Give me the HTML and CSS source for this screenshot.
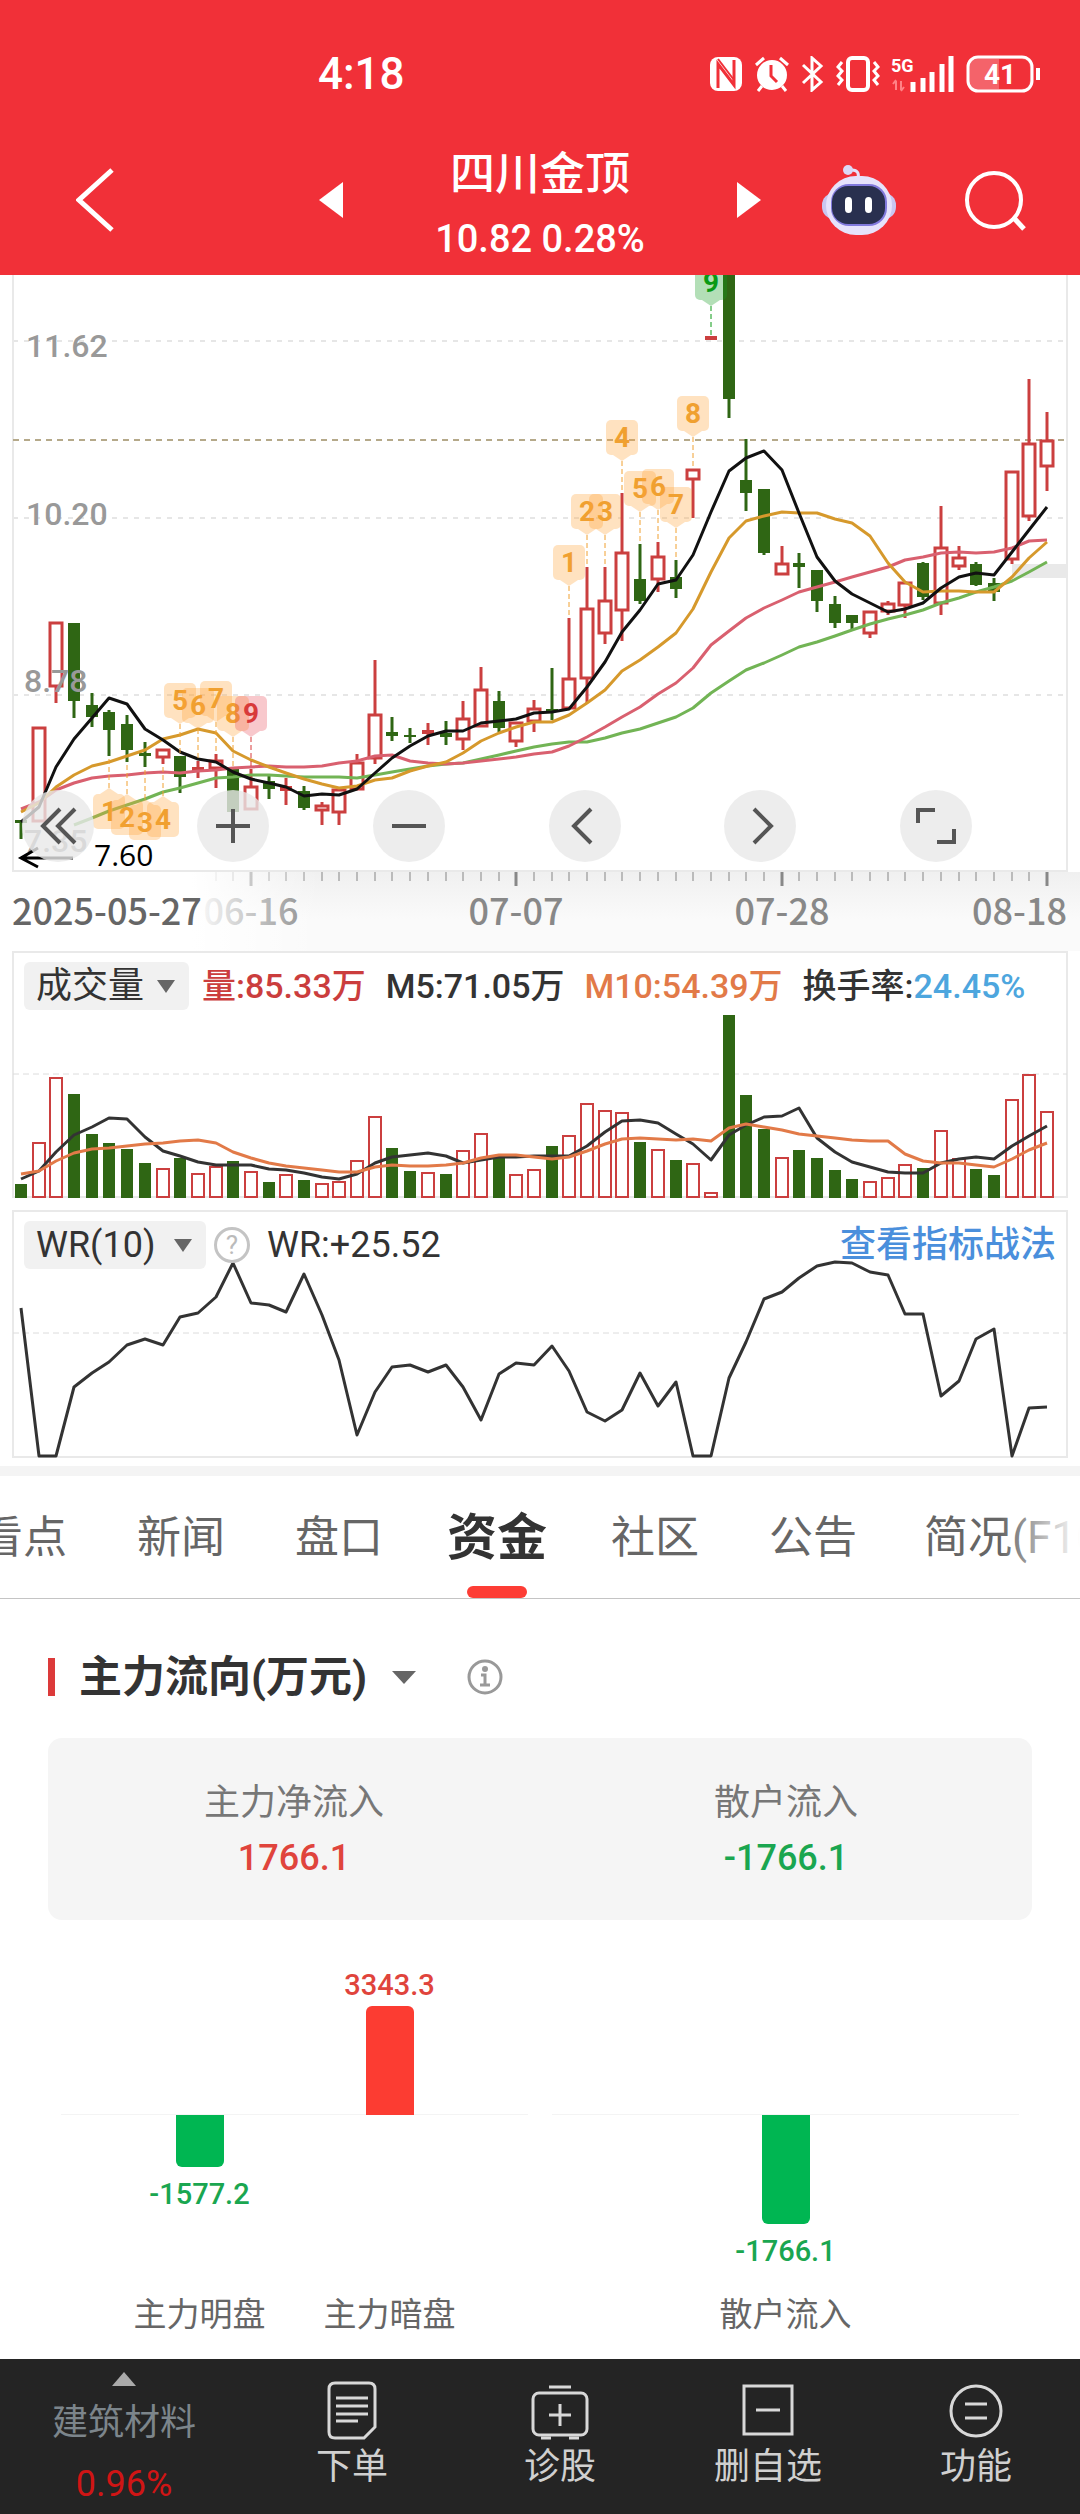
FILE: index.html
```html
<!DOCTYPE html>
<html lang="zh-CN">
<head>
<meta charset="UTF-8">
<meta name="viewport" content="width=device-width, initial-scale=1">
<title>四川金顶</title>
<link rel="stylesheet" href="styles.css">
</head>
<body>

<header class="header">
	<div class="status">
		<span class="time">4:18</span>
		<div class="status-icons">
			<svg width="34" height="36" viewBox="0 0 34 36"><rect x="1" y="1" width="32" height="34" rx="8" fill="#fff"/><path d="M9 32V8l16 21V4" fill="none" stroke="#f13038" stroke-width="3"/><path d="M9 3l16 21" stroke="#f13038" stroke-width="2"/></svg>
			<svg width="36" height="36" viewBox="0 0 36 36"><circle cx="18" cy="19" r="15" fill="#fff"/><path d="M2 9l8-7M34 9l-8-7M8 30l-4 5M28 30l4 5" stroke="#fff" stroke-width="3"/><path d="M17 9v11l6 6" fill="none" stroke="#f13038" stroke-width="3"/></svg>
			<svg width="24" height="36" viewBox="0 0 24 36"><path d="M2 9l18 17-9 8V2l9 8L2 27" fill="none" stroke="#fff" stroke-width="3"/></svg>
			<svg width="44" height="36" viewBox="0 0 44 36"><rect x="12" y="2" width="20" height="32" rx="4" fill="none" stroke="#fff" stroke-width="4"/><path d="M6 6l-4 5 4 4-4 5 4 4-4 5M38 6l4 5-4 4 4 5-4 4 4 5" fill="none" stroke="#fff" stroke-width="3"/></svg>
			<svg width="64" height="38" viewBox="0 0 64 38"><text x="0" y="17" class="net">5G</text><path d="M5 26v9m-3-6l3-4m5 10v-9m3 6l-3 4" fill="none" stroke="#ff8286" stroke-width="2"/><path d="M22 37V27M32 37V23M41 37V17M51 37V9M60 37V1" stroke="#fff" stroke-width="5"/></svg>
			<svg width="74" height="38" viewBox="0 0 74 38"><rect x="2" y="2" width="64" height="34" rx="10" fill="#f4636a" stroke="#fff" stroke-width="3"/><path d="M33 4h22q9 0 9 9v12q0 9-9 9H33z" fill="#f13038"/><path d="M72 13v12" stroke="#fff" stroke-width="4"/><text x="34" y="29" class="power">41</text></svg>
		</div>
	</div>
	<nav class="nav">
		<button class="back" aria-label="返回"><svg width="38" height="64" viewBox="0 0 38 64"><path d="M36 2L3 32l33 30" fill="none" stroke="#fff" stroke-width="5"/></svg></button>
		<div class="stock">
			<button aria-label="上一只"><svg width="24" height="36" viewBox="0 0 24 36"><path d="M24 0v36L0 18z" fill="#fff"/></svg></button>
			<div class="name">
				<h1>四川金顶</h1>
				<p class="num">10.82 0.28%</p>
			</div>
			<button aria-label="下一只"><svg width="24" height="36" viewBox="0 0 24 36"><path d="M0 0v36l24-18z" fill="#fff"/></svg></button>
		</div>
		<div class="tools">
			<button aria-label="智能助手"><svg width="74" height="70" viewBox="0 0 74 70"><path d="M36 14q2-9-6-9" fill="none" stroke="#e6e1fb" stroke-width="3"/><circle cx="26" cy="5" r="5" fill="#dcd8f6"/><rect x="0" y="28" width="74" height="26" rx="12" fill="#c9c6f0"/><rect x="4" y="11" width="66" height="59" rx="30" fill="#e6e2fb"/><rect x="9" y="19" width="56" height="42" rx="18" fill="#8179dc"/><rect x="10" y="21" width="53" height="38" rx="16" fill="#29304f"/><rect x="23" y="32" width="7" height="16" rx="4" fill="#fff"/><rect x="43" y="32" width="7" height="16" rx="4" fill="#fff"/></svg></button>
			<button aria-label="搜索"><svg width="62" height="62" viewBox="0 0 62 62"><circle cx="30" cy="31" r="27" fill="none" stroke="#fff" stroke-width="4"/><path d="M49 48l11 12" stroke="#fff" stroke-width="5"/></svg></button>
		</div>
	</nav>
</header>

<main>
	<section class="panel">
		<svg id="kline" class="chart" viewBox="0 275 1080 597"></svg>
		<div class="controls">
			<button aria-label="收起"><svg viewBox="0 0 72 72"><path d="M38 19L21 36l17 17M53 19L36 36l17 17"/></svg></button>
			<button aria-label="放大"><svg viewBox="0 0 72 72"><path d="M19 36h34M36 19v34"/></svg></button>
			<button aria-label="缩小"><svg viewBox="0 0 72 72"><path d="M19 36h34"/></svg></button>
			<button aria-label="左移"><svg viewBox="0 0 72 72"><path d="M42 19L25 36l17 17"/></svg></button>
			<button aria-label="右移"><svg viewBox="0 0 72 72"><path d="M30 19l17 17-17 17"/></svg></button>
			<button aria-label="全屏"><svg viewBox="0 0 72 72"><path d="M18 33V20h17M54 39v13H37"/></svg></button>
		</div>
	</section>
	<svg id="axis" class="chart axis" viewBox="0 872 1080 79"></svg>

	<section class="panel volume">
		<svg id="vol" class="chart" viewBox="0 951 1080 248"></svg>
		<div class="legend">
			<label class="drop"><select aria-label="成交量指标"><option>成交量</option></select></label>
			<div class="vals num">
				<span class="red">量:85.33万</span>
				<span>M5:71.05万</span>
				<span class="orange">M10:54.39万</span>
				<span>换手率:<b>24.45%</b></span>
			</div>
		</div>
	</section>

	<section class="panel wr">
		<svg id="wr" class="chart" viewBox="0 1210 1080 248"></svg>
		<div class="legend">
			<label class="drop"><select aria-label="技术指标"><option>WR(10)</option></select></label>
			<button class="help" aria-label="说明">?</button>
			<span>WR:+25.52</span>
			<a href="#" class="more">查看指标战法</a>
		</div>
	</section>

	<nav class="tabs">
		<a href="#">看点</a>
		<a href="#">新闻</a>
		<a href="#">盘口</a>
		<a href="#" class="active">资金</a>
		<a href="#">社区</a>
		<a href="#">公告</a>
		<a href="#" class="last">简况(F10)</a>
	</nav>

	<section class="fund">
		<div class="title">
			<label class="drop"><select aria-label="主力流向"><option>主力流向(万元)</option></select></label>
			<button aria-label="说明"><svg width="38" height="38" viewBox="0 0 38 38"><g fill="none" stroke="#999" stroke-width="3"><circle cx="19" cy="19" r="16"/><path d="M15 17h4v10M14 27h10"/></g><circle cx="19" cy="11" r="3" fill="#999"/></svg></button>
		</div>
		<dl class="card">
			<div><dt>主力净流入</dt><dd class="num up">1766.1</dd></div>
			<div><dt>散户流入</dt><dd class="num down">-1766.1</dd></div>
		</dl>
		<div class="flow">
			<div class="group">
				<div class="col">
					<div class="above"></div>
					<div class="below down"><i style="height:52px"></i><span class="num">-1577.2</span></div>
					<p>主力明盘</p>
				</div>
				<div class="col">
					<div class="above up"><span class="num">3343.3</span><i style="height:109px"></i></div>
					<div class="below"></div>
					<p>主力暗盘</p>
				</div>
			</div>
			<div class="group">
				<div class="col">
					<div class="above"></div>
					<div class="below down"><i style="height:109px"></i><span class="num">-1766.1</span></div>
					<p>散户流入</p>
				</div>
			</div>
		</div>
	</section>
</main>

<footer class="footer">
	<a href="#" class="sector">
		<svg width="24" height="14" viewBox="0 0 24 14"><path d="M12 0l12 14H0z" fill="#aaa"/></svg>
		<span>建筑材料</span>
		<em class="num">0.96%</em>
	</a>
	<a href="#"><svg width="60" height="60" viewBox="0 0 60 60"><path d="M13 3h34q6 0 6 6v38l-11 11H13q-6 0-6-6V9q0-6 6-6z"/><path d="M14 18h32M14 26h32M14 34h32M14 41h22"/></svg><span>下单</span></a>
	<a href="#"><svg width="60" height="60" viewBox="0 0 60 60"><rect x="3" y="13" width="54" height="42" rx="6"/><path d="M19 7h22M30 24v22M19 35h22M11 58h10M39 58h10"/></svg><span>诊股</span></a>
	<a href="#"><svg width="60" height="60" viewBox="0 0 60 60"><rect x="6" y="6" width="48" height="48"/><path d="M18 30h24"/></svg><span>删自选</span></a>
	<a href="#"><svg width="60" height="60" viewBox="0 0 60 60"><circle cx="30" cy="31" r="25"/><path d="M19 24h22M19 38h22"/></svg><span>功能</span></a>
</footer>

<script src="chart.js"></script>
</body>
</html>
```
FILE: styles.css
```css
*{ margin:0; padding:0; box-sizing:border-box;}
body{
	background:#fff;
	color:#333;
	font-family:Roboto, "Noto Sans CJK SC", sans-serif;
	font-size:36px;
}
button{ border:0; background:none; font:inherit; color:inherit;}
a{ color:inherit; text-decoration:none;}
svg{ display:block;}
em,i{ font-style:normal;}
.num{ font-weight:500;}

/* 顶部 */
.header{
	background:#f13038;
	color:#fff;
	height:275px;
}
.status{
	display:flex;
	justify-content:space-between;
	align-items:center;
	height:148px;
	padding:0 40px 0 318px;
}
.time{ font-size:44px; font-weight:500;}
.status-icons{
	display:flex;
	align-items:center;
	gap:11px;
}
.net{ font:bold 18px Roboto, sans-serif; fill:#fff;}
.power{ font:bold 28px Roboto, sans-serif; fill:#fff; text-anchor:middle;}
.nav{
	display:grid;
	grid-template-columns:1fr 442px 1fr;
	grid-template-rows:104px;
	align-items:center;
}
.back{ justify-self:start; padding-left:76px;}
.stock{
	display:flex;
	justify-content:space-between;
	align-items:center;
}
.name{ padding-top:14px; text-align:center;}
.name h1{ font-size:45px; line-height:64px; font-weight:500;}
.name p{ font-size:38px; line-height:64px;}
.tools{
	display:flex;
	justify-content:flex-end;
	align-items:center;
	gap:68px;
	padding-right:54px;
}

/* 图表 */
.panel{ position:relative;}
.chart{ width:100%; height:auto; overflow:hidden;}
.axis{ background:linear-gradient(#f0f0f0, #fafafa 60%);}
.wr{ margin-top:11px;}
.frame{ fill:none; stroke:#e9e9e9; stroke-width:2;}
.grid{ stroke:#e6e6e6; stroke-width:2; stroke-dasharray:5 6;}
.thin{ stroke:#dcdcdc; stroke-width:1; stroke-dasharray:6 4;}
.price{ stroke:#b5a98a; stroke-width:2; stroke-dasharray:6 5;}
.line{ fill:none; stroke-width:3; stroke-linejoin:round;}
.scale{ font:500 32px Roboto, sans-serif; fill:#999;}
.low{ font:30px "Open Sans", sans-serif; fill:#000;}
.tag{ font:bold 28px Roboto, sans-serif; text-anchor:middle;}
.date{ font:500 36px "Noto Sans CJK SC", sans-serif; fill:#888;}
.date .start{ fill:#666;}
.controls{
	position:absolute;
	left:2%;
	right:10%;
	bottom:10px;
	display:flex;
	justify-content:space-between;
}
.controls button{
	width:72px;
	height:72px;
	border-radius:50%;
	background:rgba(232,232,232,.8);
}
.controls path{ fill:none; stroke:#555; stroke-width:4;}
.legend{
	position:absolute;
	top:11px;
	left:24px;
	right:24px;
	display:flex;
	align-items:center;
	height:48px;
	white-space:nowrap;
	line-height:48px;
}
.drop{
	display:flex;
	align-items:center;
	gap:12px;
}
.drop:after{
	content:"";
	border:9px solid transparent;
	border-top:13px solid #666;
	border-bottom:0;
}
.drop select{
	appearance:none;
	border:0;
	background:none;
	font:inherit;
	color:inherit;
}
.legend .drop{
	height:48px;
	padding:0 14px 0 12px;
	border-radius:6px;
	background:#f1f1f1;
}
.wr .drop{ gap:18px;}
.vals{
	display:flex;
	gap:20px;
	margin-left:13px;
	font-size:34px;
}
.vals b{ font-weight:500; color:#4da6de;}
.red{ color:#cb3d3d;}
.orange{ color:#e27a48;}
.help{
	width:36px;
	height:36px;
	margin:0 17px 0 8px;
	border:3px solid #c4c4c4;
	border-radius:50%;
	color:#bbb;
	font-size:26px;
	line-height:30px;
}
.more{ margin-left:auto; color:#4a8fdc; font-weight:500;}

/* 标签 */
.tabs{
	position:relative;
	display:flex;
	height:133px;
	margin-top:8px;
	padding-right:40px;
	border-top:10px solid #f4f4f4;
	border-bottom:1px solid #c4c4c4;
	overflow:hidden;
	white-space:nowrap;
	color:#666;
	font-size:44px;
	line-height:124px;
}
.tabs a{
	flex:none;
	width:158px;
	text-align:center;
}
.tabs a:first-child{ margin-left:-56px;}
.tabs .last{ width:auto; padding-left:32px;}
.tabs .active{
	position:relative;
	color:#333;
	font-size:50px;
	font-weight:700;
}
.tabs .active:after{
	content:"";
	position:absolute;
	left:50%;
	bottom:0;
	width:60px;
	height:12px;
	margin-left:-30px;
	border-radius:6px;
	background:#fd3d35;
}
.tabs:after{
	content:"";
	position:absolute;
	right:0;
	top:0;
	width:80px;
	height:100%;
	background:linear-gradient(to right, rgba(255,255,255,0), #fff);
}

/* 资金 */
.fund{ padding:48px 48px 0;}
.title{
	display:flex;
	align-items:center;
	gap:50px;
	height:60px;
}
.title .drop{ gap:24px; font-size:43px; font-weight:700;}
.title .drop:before{
	content:"";
	width:7px;
	height:38px;
	background:#dc3a3a;
}
.title .drop:after{ border-width:13px 12px 0;}
.card{
	display:grid;
	grid-template-columns:1fr 1fr;
	margin-top:31px;
	padding:38px 0 34px;
	border-radius:14px;
	background:#f5f5f5;
	text-align:center;
	color:#777;
	line-height:55px;
}
.up,.up span{ color:#e0443c;}
.down,.down span{ color:#1aa650;}
.flow{
	display:grid;
	grid-template-columns:1fr 1fr;
	gap:24px;
	padding:35px 13px 0;
}
.group{
	display:flex;
	justify-content:center;
	background:linear-gradient(#f4f4f4, #f4f4f4) 0 159px / 100% 1px no-repeat;
}
.col{
	width:190px;
	display:flex;
	flex-direction:column;
	text-align:center;
	color:#666;
	font-size:33px;
}
.col .num{ font-size:29px; line-height:42px;}
.above,.below{
	display:flex;
	flex-direction:column;
	align-items:center;
	height:160px;
}
.above{ justify-content:flex-end;}
.col i{ width:48px;}
.above i{ border-radius:6px 6px 0 0; background:#fc3c32;}
.below i{ border-radius:0 0 6px 6px; background:#00b652;}
.below span{ padding-top:6px;}
.col p{ line-height:40px; padding:20px 0 24px;}

/* 底部 */
.footer{
	display:grid;
	grid-template-columns:248px repeat(4, 1fr);
	height:155px;
	background:#242424;
	color:#d0d0d0;
}
.footer a{
	display:flex;
	flex-direction:column;
	align-items:center;
	gap:3px;
	padding-top:21px;
	line-height:48px;
}
.footer a svg{ fill:none; stroke:#d8d8d8; stroke-width:3;}
.footer .sector{ gap:13px; padding-top:13px; color:#7c858b;}
.footer .sector svg{ stroke:none;}
.sector em{ color:#d01515; font-weight:400;}
```
FILE: chart.js
```javascript
// 每根K线: [涨跌(1红 0绿), 实体上, 实体下, 最高, 最低]
var k = [
	[0,820,823,820,839],[1,727,822,727,822],[1,622,687,622,703],[0,623,701,623,718],[0,705,717,693,727],
	[0,712,730,710,756],[0,724,750,715,762],[0,753,756,742,767],[1,749,758,749,764],[0,756,777,756,793],
	[1,767,772,761,778],[1,760,769,754,788],[0,769,812,769,812],[1,786,810,769,810],[0,781,789,776,799],
	[1,786,791,778,805],[0,791,808,786,810],[1,805,811,802,825],[1,789,813,789,825],[1,762,790,754,790],
	[1,714,759,660,764],[0,732,736,717,741],[0,735,737,728,743],[1,730,734,723,745],[0,733,737,721,745],
	[1,718,740,701,750],[1,689,727,667,727],[0,701,728,691,732],[1,722,742,722,747],[1,708,722,700,732],
	[0,709,712,668,720],[1,678,709,618,709],[1,608,679,567,703],[1,600,634,567,644],[1,552,611,493,641],
	[0,579,601,544,604],[1,556,580,542,592],[0,577,589,560,598],[1,469,480,469,518],[1,336,340,338,338],
	[0,260,399,260,418],[0,480,493,439,511],[0,489,553,489,555],[1,563,575,546,575],[0,563,567,553,588],
	[0,570,601,570,612],[0,604,623,596,628],[0,615,623,615,629],[1,611,634,611,638],[1,603,612,601,615],
	[1,582,606,582,618],[0,563,597,562,600],[1,547,604,506,615],[1,557,567,546,570],[0,564,585,562,586],
	[0,583,592,578,601],[1,471,560,471,564],[1,443,517,379,521],[1,440,467,412,491]
];
var ma5 = [822,807,767,739,718,698,704,729,740,752,759,762,772,779,783,787,796,794,795,789,773,758,746,736,731,731,723,721,719,713,712,709,687,662,632,610,584,580,555,512,471,458,451,470,513,557,581,594,603,612,609,603,588,577,573,575,552,530,507];
var ma10 = [812,803,787,775,766,762,756,750,739,735,729,733,751,760,767,773,779,784,788,786,780,778,771,766,762,753,741,733,727,722,722,715,703,690,671,660,647,633,609,572,538,521,516,512,513,513,519,523,536,563,582,592,591,591,592,592,577,558,542];
var ma20 = [809,802,790,783,778,776,775,773,772,773,771,770,768,767,766,767,767,766,763,761,756,755,761,763,764,763,761,759,757,754,752,746,737,727,717,707,694,683,668,645,631,618,608,600,592,587,582,577,572,567,560,557,553,552,553,552,548,541,540];
var ma30 = [840,836,832,825,818,811,805,799,792,788,783,778,777,775,775,776,777,777,777,778,775,772,769,766,764,763,759,755,751,747,744,742,742,738,733,729,723,717,708,693,681,670,663,655,647,642,636,630,624,619,615,610,603,598,592,587,581,572,562];
var vol = [1184,1142,1077,1094,1134,1143,1149,1163,1168,1158,1173,1166,1161,1171,1182,1174,1180,1183,1181,1160,1116,1148,1171,1172,1174,1150,1133,1157,1174,1169,1146,1135,1103,1110,1112,1142,1149,1160,1163,1192,1015,1095,1129,1157,1150,1158,1170,1179,1181,1177,1164,1168,1130,1158,1169,1175,1099,1074,1111];
var vol5 = [1179,1171,1152,1135,1127,1118,1119,1137,1151,1156,1162,1165,1165,1165,1169,1170,1173,1177,1179,1174,1163,1157,1155,1153,1156,1163,1160,1157,1157,1156,1156,1156,1146,1132,1121,1120,1123,1134,1144,1160,1135,1125,1117,1116,1108,1138,1152,1162,1167,1172,1173,1173,1163,1159,1157,1159,1146,1136,1126];
var vol10 = [1174,1171,1161,1153,1149,1148,1146,1144,1143,1141,1140,1143,1152,1158,1163,1166,1168,1170,1172,1172,1167,1165,1166,1166,1165,1163,1158,1155,1155,1157,1159,1157,1151,1144,1139,1138,1139,1140,1139,1141,1128,1124,1127,1130,1134,1136,1138,1140,1141,1141,1154,1161,1163,1163,1165,1167,1159,1150,1143];
var wr = [1308,1456,1456,1387,1373,1362,1345,1339,1345,1317,1313,1297,1263,1303,1305,1312,1274,1315,1360,1435,1392,1367,1365,1372,1365,1387,1420,1374,1363,1365,1346,1371,1412,1421,1410,1373,1406,1382,1456,1456,1378,1342,1299,1292,1278,1266,1262,1263,1272,1275,1314,1314,1396,1381,1339,1329,1456,1408,1407];
// 九转标记: [序号, 数字, 1在上 / -1在下, 颜色]
var tags = [
	[5,1,-1],[6,2,-1],[7,3,-1],[8,4,-1],
	[9,5,1],[10,6,1],[11,7,1],[12,8,1],[13,9,1,'red'],
	[31,1,1],[32,2,1],[33,3,1],[34,4,1],[35,5,1],[36,6,1],[37,7,1],[38,8,1],[39,9,1,'green']
];
var tagColor = {
	orange: ['#f0a030','#ffa53c'],
	red: ['#d83a3a','#ea5560'],
	green: ['#0a9a14','#149a1e']
};
var RED = '#cb3f3f', GREEN = '#2f6614';

function x(i){ return Math.round(21 + i * 1026 / 58); }
function hline(y, cls){ return '<path class="' + cls + '" d="M13 ' + y + 'H1067"/>'; }
function line(data, color, from){
	var pts = [];
	for(var i = from || 0; i < data.length; i++){ pts.push(x(i) + ',' + data[i]); }
	return '<polyline class="line" stroke="' + color + '" points="' + pts.join(' ') + '"/>';
}
function box(i, top, bottom, up, w){
	if(!up || bottom - top < 6){
		return '<rect x="' + (x(i) - 6) + '" y="' + top + '" width="12" height="' + (bottom - top) + '" fill="' + (up ? RED : GREEN) + '"/>';
	}
	return '<rect x="' + (x(i) - 6) + '" y="' + (top + 1) + '" width="12" height="' + (bottom - top - 2) + '" fill="#fff" stroke="' + RED + '" stroke-width="' + w + '"/>';
}
function tag(t){
	var cx = x(t[0]), c = tagColor[t[3] || 'orange'], d = k[t[0]];
	var end = t[2] > 0 ? d[3] : d[4];
	var tip = end - 32 * t[2];
	var top = t[2] > 0 ? tip - 41 : tip + 6;
	return '<path d="M' + cx + ' ' + tip + 'V' + end + '" stroke="' + c[0] + '" stroke-dasharray="5 3"/>' +
		'<g fill="' + c[1] + '" fill-opacity=".32"><rect x="' + (cx - 16) + '" y="' + top + '" width="32" height="35" rx="5"/>' +
		'<path d="M' + (cx - 9) + ' ' + (tip - 6 * t[2]) + 'h18L' + cx + ' ' + tip + 'z"/></g>' +
		'<text class="tag" x="' + cx + '" y="' + (top + 27) + '" fill="' + c[0] + '">' + t[1] + '</text>';
}

// K线
var s = hline(341,'grid') + hline(518,'grid') + hline(695,'grid') +
	'<path class="frame" d="M13 270V871H1067V270"/><rect x="1012" y="564" width="55" height="14" fill="#e9e9e9"/>' + hline(440,'price');
k.forEach(function(d, i){
	s += '<path d="M' + x(i) + ' ' + d[3] + 'V' + d[4] + '" stroke="' + (d[0] ? RED : GREEN) + '" stroke-width="3"/>' + box(i, d[1], d[2], d[0], 3);
});
s += line(ma30,'#72b455',3) + line(ma20,'#d9606f') + line(ma10,'#d6992c') + line(ma5,'#111');
tags.forEach(function(t){ s += tag(t); });
s += '<g class="scale"><text x="26" y="357">11.62</text><text x="26" y="525">10.20</text><text x="24" y="692">8.78</text><text x="24" y="852">7.35</text></g>' +
	'<path d="M73 858H21M38 848L21 858l17 9" fill="none" stroke="#000" stroke-width="3"/><text class="low" x="94" y="866">7.60</text>';
document.getElementById('kline').innerHTML = s;

// 时间轴
s = '';
for(var i = 11; i < 59; i++){
	var big = i % 15 == 13;
	s += '<path d="M' + x(i) + ' 872v' + (big ? 14 : 9) + '" stroke="' + (big ? '#888' : '#bbb') + '" stroke-width="' + (big ? 3 : 2) + '"/>';
}
s += '<g class="date"><text x="251" y="925" text-anchor="middle">06-16</text><text x="516" y="925" text-anchor="middle">07-07</text>' +
	'<text x="782" y="925" text-anchor="middle">07-28</text><text x="1067" y="925" text-anchor="end">08-18</text></g>' +
	'<defs><linearGradient id="fade"><stop offset=".6" stop-color="#fff"/><stop offset="1" stop-color="#fff" stop-opacity="0"/></linearGradient></defs>' +
	'<rect x="0" y="872" width="320" height="79" fill="url(#fade)"/><g class="date"><text class="start" x="12" y="925">2025-05-27</text></g>';
document.getElementById('axis').innerHTML = s;

// 成交量
s = '<rect class="frame" x="13" y="952" width="1054" height="245"/>' + hline(1074,'thin');
vol.forEach(function(v, i){ s += box(i, v, 1198, k[i][0], 2); });
s += line(vol5,'#333') + line(vol10,'#e27a48');
document.getElementById('vol').innerHTML = s;

// WR
document.getElementById('wr').innerHTML = '<rect class="frame" x="13" y="1211" width="1054" height="246"/>' + hline(1333,'thin') + line(wr,'#333');
```
